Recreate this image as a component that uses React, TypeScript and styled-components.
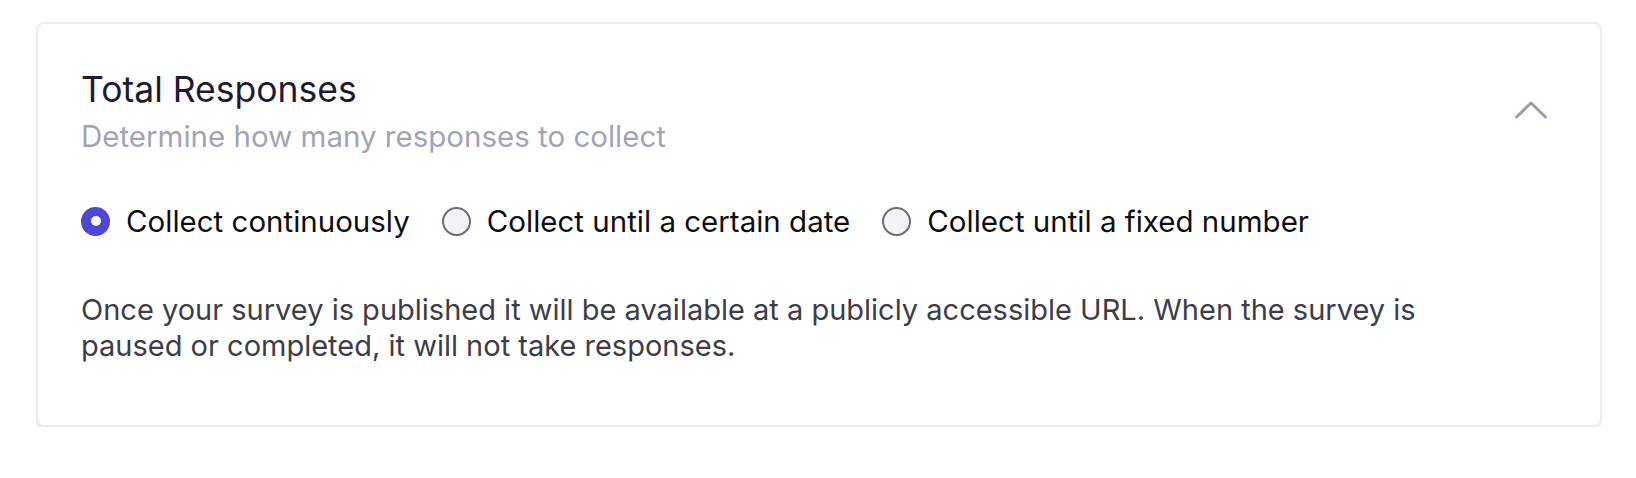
import React, { useState } from "react";
import styled, { createGlobalStyle } from "styled-components";

const GlobalStyle = createGlobalStyle`
  html, body {
    margin: 0;
    padding: 0;
    background: #ffffff;
  }
  body {
    font-family: Inter, "Noto Sans", "Liberation Sans", sans-serif;
    -webkit-font-smoothing: antialiased;
  }
`;

const Page = styled.div`
  padding: 22px 34px 0 36px;
`;

const Card = styled.section`
  box-sizing: border-box;
  width: 1566px;
  background: #ffffff;
  border: 2px solid #ebebf1;
  border-radius: 8px;
  box-shadow: 0 3px 0 #f4f4f6;
  padding: 44px 44px 61px 43px;
`;

const Header = styled.div`
  display: flex;
  align-items: flex-start;
  justify-content: space-between;
`;

const HeaderText = styled.div`
  display: flex;
  flex-direction: column;
  gap: 4px;
`;

const Title = styled.h2`
  margin: 0;
  font-size: 35.5px;
  line-height: 44px;
  font-weight: 400;
  color: #1d1b31;
`;

const Subtitle = styled.p`
  margin: 0;
  font-size: 29.5px;
  line-height: 40px;
  font-weight: 400;
  color: #a3a3b6;
`;

const ToggleButton = styled.button`
  border: 0;
  background: transparent;
  padding: 0;
  margin: 32px 8px 0 0;
  width: 34px;
  height: 20px;
  display: flex;
  align-items: center;
  justify-content: center;
  cursor: pointer;
`;

const RadioGroup = styled.div`
  display: flex;
  align-items: center;
  gap: 32px;
  margin-top: 47px;
`;

const RadioOption = styled.label`
  display: flex;
  align-items: center;
  gap: 16px;
  cursor: pointer;
  font-size: 29.5px;
  line-height: 36px;
  color: #0d0d12;
`;

const HiddenInput = styled.input`
  position: absolute;
  opacity: 0;
  width: 0;
  height: 0;
`;

const RadioCircle = styled.span<{ $checked: boolean }>`
  box-sizing: border-box;
  width: 29px;
  height: 29px;
  border-radius: 50%;
  flex-shrink: 0;
  display: flex;
  align-items: center;
  justify-content: center;
  background: ${(p) => (p.$checked ? "#4f46d8" : "#f3f3f5")};
  border: ${(p) => (p.$checked ? "0" : "2px solid #6c6b80")};

  &::after {
    content: "";
    width: 10px;
    height: 10px;
    border-radius: 50%;
    background: #ffffff;
    display: ${(p) => (p.$checked ? "block" : "none")};
  }
`;

const Description = styled.p`
  margin: 53px 0 0;
  font-size: 29px;
  line-height: 36px;
  color: #3d3d47;
  max-width: 1400px;
`;

const options = [
  { id: "continuous", label: "Collect continuously" },
  { id: "date", label: "Collect until a certain date" },
  { id: "number", label: "Collect until a fixed number" },
];

export default function App() {
  const [selected, setSelected] = useState("continuous");
  return (
    <>
      <GlobalStyle />
      <Page>
        <Card>
          <Header>
            <HeaderText>
              <Title>Total Responses</Title>
              <Subtitle>Determine how many responses to collect</Subtitle>
            </HeaderText>
            <ToggleButton aria-label="Collapse">
              <svg width="34" height="20" viewBox="0 0 34 20" fill="none">
                <path
                  d="M2.5 17 L17 3 L31.5 17"
                  stroke="#9d9cae"
                  strokeWidth="3"
                  strokeLinecap="round"
                  strokeLinejoin="round"
                />
              </svg>
            </ToggleButton>
          </Header>
          <RadioGroup role="radiogroup">
            {options.map((o) => (
              <RadioOption key={o.id}>
                <HiddenInput
                  type="radio"
                  name="collect"
                  checked={selected === o.id}
                  onChange={() => setSelected(o.id)}
                />
                <RadioCircle $checked={selected === o.id} />
                {o.label}
              </RadioOption>
            ))}
          </RadioGroup>
          <Description>
            Once your survey is published it will be available at a publicly
            accessible URL. When the survey is paused or completed, it will not
            take responses.
          </Description>
        </Card>
      </Page>
    </>
  );
}
